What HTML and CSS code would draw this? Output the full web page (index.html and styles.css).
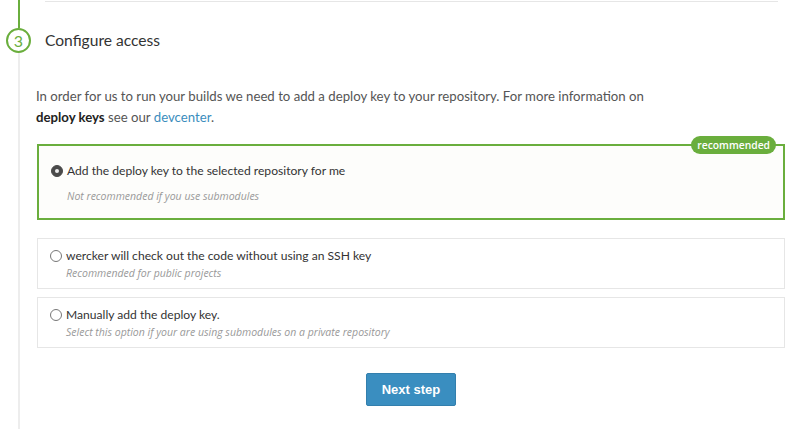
FILE: index.html
```html
<!DOCTYPE html>
<html lang="en">
<head>
<meta charset="utf-8">
<title>Configure access</title>
<link rel="stylesheet" href="styles.css">
</head>
<body>
<div class="step">
  <div class="rail">
    <span class="rail-top"></span>
    <span class="num">3</span>
    <span class="rail-bottom"></span>
  </div>
  <div class="content">
    <div class="head"><h2 class="title">Configure access</h2></div>
    <p class="intro">In order for us to run your builds we need to add a deploy key to your repository. For more information on <strong>deploy keys</strong> see our <a class="link" href="#">devcenter</a>.</p>

    <label class="option selected">
      <span class="badge">recommended</span>
      <span class="radio on"></span>
      <span class="opt-text">
        <span class="opt-title">Add the deploy key to the selected repository for me</span>
        <span class="opt-sub">Not recommended if you use submodules</span>
      </span>
    </label>

    <label class="option compact first">
      <span class="radio"></span>
      <span class="opt-text">
        <span class="opt-title">wercker will check out the code without using an SSH key</span>
        <span class="opt-sub">Recommended for public projects</span>
      </span>
    </label>

    <label class="option compact">
      <span class="radio"></span>
      <span class="opt-text">
        <span class="opt-title">Manually add the deploy key.</span>
        <span class="opt-sub">Select this option if your are using submodules on a private repository</span>
      </span>
    </label>

    <div class="actions"><button class="btn" type="button">Next step</button></div>
  </div>
</div>
</body>
</html>
```

FILE: styles.css
```css
html, body {
  margin: 0;
  padding: 0;
  background: #ffffff;
}
body {
  font-family: Lato, "Open Sans", sans-serif;
  color: #555;
  height: 429px;
  overflow: hidden;
}
.step {
  display: flex;
  height: 429px;
}
.rail {
  width: 37px;
  flex: none;
  display: flex;
  flex-direction: column;
  align-items: center;
}
.rail-top {
  width: 2px;
  height: 28px;
  background: #6aae3d;
}
.num {
  box-sizing: border-box;
  width: 25px;
  height: 25px;
  border: 2px solid #6aae3d;
  border-radius: 50%;
  color: #6aae3d;
  font-size: 16px;
  line-height: 21px;
  text-align: center;
  background: #fff;
}
.rail-bottom {
  width: 2px;
  flex: 1;
  background: #ededed;
}
.content {
  width: 748px;
  display: flex;
  flex-direction: column;
}
.head {
  margin: 1px 7px 0 8px;
  border-top: 1px solid #e6e6e6;
  padding-top: 27px;
}
.title {
  margin: 0;
  font-size: 15.6px;
  font-weight: 400;
  line-height: 22px;
  color: #333;
}
.intro {
  margin: 35px 0 0 -1px;
  max-width: 640px;
  font-size: 13.2px;
  line-height: 21px;
  color: #555;
}
.intro strong {
  color: #222;
  font-weight: 700;
}
.link {
  color: #3b8dbd;
  text-decoration: none;
}
.option {
  position: relative;
  display: flex;
  align-items: flex-start;
  box-sizing: border-box;
  border: 1px solid #e6e6e6;
  background: #fff;
  margin-top: 8px;
  padding: 8px 12px 7px 12px;
}
.option.selected {
  margin-top: 16px;
  border: 2px solid #6aae3d;
  background: #fdfdfb;
  padding: 15px 12px 13px 12px;
}
.option.first {
  margin-top: 18px;
}
.badge {
  position: absolute;
  top: -10px;
  right: 7px;
  height: 18px;
  padding: 0 6px;
  border-radius: 9px;
  background: #6aae3d;
  color: #fff;
  font-family: "Open Sans", sans-serif;
  font-size: 10.3px;
  font-weight: 600;
  line-height: 18px;
}
.radio {
  flex: none;
  box-sizing: border-box;
  width: 12px;
  height: 12px;
  border: 1px solid #777;
  border-radius: 50%;
  background: #fff;
  margin: 3px 4px 0 0;
}
.option.selected .radio {
  margin-top: 4px;
}
.radio.on {
  background: #4a4a4a;
  border-color: #4a4a4a;
  display: flex;
  align-items: center;
  justify-content: center;
}
.radio.on::after {
  content: "";
  width: 4px;
  height: 4px;
  border-radius: 50%;
  background: #eee;
}
.opt-text {
  display: flex;
  flex-direction: column;
}
.opt-title {
  font-size: 12.1px;
  line-height: 18px;
  color: #333;
}
.option.selected .opt-title {
  line-height: 20px;
}
.opt-sub {
  font-family: "Open Sans", sans-serif;
  font-size: 10.5px;
  font-style: italic;
  line-height: 16px;
  color: #999;
}
.option.selected .opt-sub {
  margin-top: 6px;
  line-height: 18px;
}
.actions {
  display: flex;
  justify-content: center;
  margin-top: 25px;
}
.btn {
  width: 90px;
  height: 33px;
  border: 1px solid #337fad;
  border-radius: 2px;
  background: #3a8ec0;
  color: #fff;
  font-family: "Liberation Sans", Arial, sans-serif;
  font-size: 13px;
  font-weight: 700;
  padding: 0;
  cursor: pointer;
}
```
